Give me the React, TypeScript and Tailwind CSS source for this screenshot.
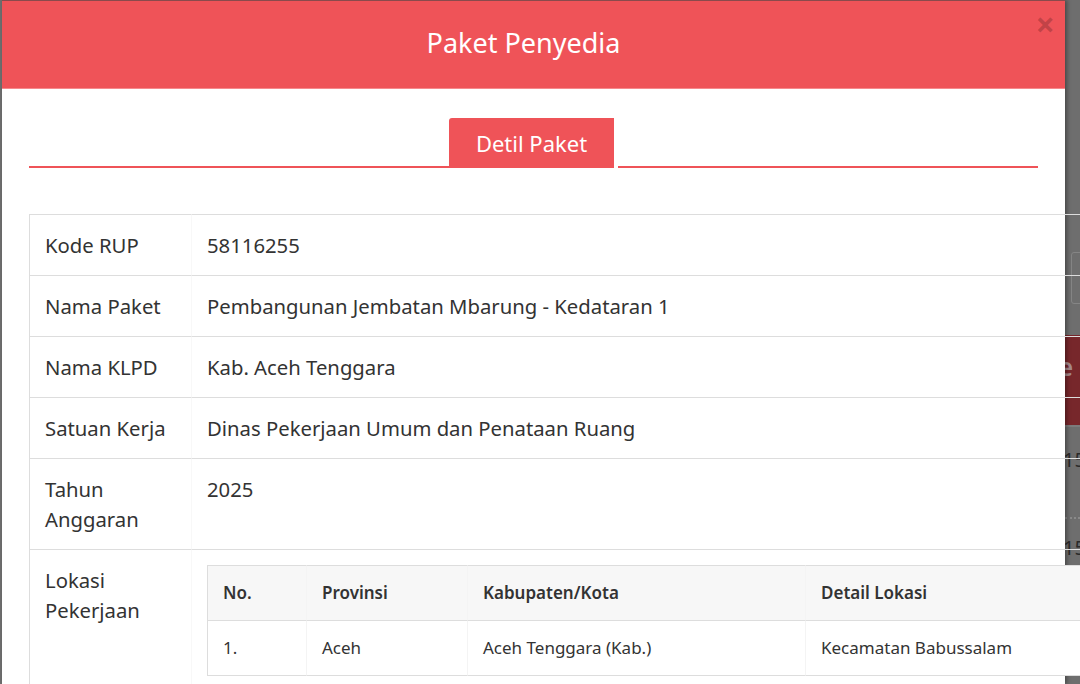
const details = [
  { label: "Kode RUP", value: "58116255" },
  { label: "Nama Paket", value: "Pembangunan Jembatan Mbarung - Kedataran 1" },
  { label: "Nama KLPD", value: "Kab. Aceh Tenggara" },
  { label: "Satuan Kerja", value: "Dinas Pekerjaan Umum dan Penataan Ruang" },
  { label: "Tahun Anggaran", value: "2025" },
];

const lokasi = [
  { no: "1.", provinsi: "Aceh", kabupaten: "Aceh Tenggara (Kab.)", detail: "Kecamatan Babussalam" },
];

function PageBehind() {
  // only a thin slice of the page under the backdrop is visible on the right
  return (
    <div className="ml-auto flex h-full w-[15px] flex-col overflow-hidden bg-[#6e6e6e] text-[#2a2a2a]">
      <div className="h-[252px] shrink-0" />
      <div className="ml-[6px] h-[52px] w-[20px] shrink-0 rounded-l-[3px] border border-[#858585]" />
      <div className="h-[31px] shrink-0" />
      <div className="flex h-[90px] shrink-0 items-start bg-[#77272b] pt-[16px]">
        <span className="ml-[-7px] text-[26px] font-semibold leading-[30px] text-[#a6898b]">e</span>
      </div>
      <div className="h-[2px] shrink-0 bg-[#7c7c7c]" />
      <div className="ml-[-2px] mt-[20px] text-[20px] leading-[26px]">15</div>
      <div className="mt-[44px] h-0 shrink-0 border-t-2 border-dotted border-[#8a8a8a]" />
      <div className="ml-[-2px] mt-[16px] text-[20px] leading-[26px]">15</div>
    </div>
  );
}

function DetailTable() {
  return (
    <table className="w-[1150px] border-separate border-spacing-0 text-[20.3px] leading-[30px] text-[#333]">
      <tbody>
        {details.map((row) => (
          <tr key={row.label}>
            <td className="w-[163px] border-t border-l border-r border-t-[#ddd] border-l-[#ddd] border-r-[#f8f8f8] px-[15px] py-[15px] align-top">
              {row.label}
            </td>
            <td className="border-t border-[#ddd] px-[15px] py-[15px] align-top">{row.value}</td>
          </tr>
        ))}
        <tr>
          <td className="w-[163px] border-t border-l border-r border-t-[#ddd] border-l-[#ddd] border-r-[#f8f8f8] px-[15px] py-[15px] align-top">
            Lokasi Pekerjaan
          </td>
          <td className="border-t border-[#ddd] px-[15px] py-[15px] align-top">
            <table className="border-separate border-spacing-0 text-[17px] leading-[24px] text-[#333]">
              <thead>
                <tr className="bg-[#f7f7f7] text-left">
                  <th className="w-[99px] border-y border-l border-[#ddd] px-[15px] py-[15px] font-semibold">No.</th>
                  <th className="w-[161px] border-y border-l border-[#ddd] border-l-[#f4f4f4] px-[15px] py-[15px] font-semibold">Provinsi</th>
                  <th className="w-[338px] border-y border-l border-[#ddd] border-l-[#f4f4f4] px-[15px] py-[15px] font-semibold">Kabupaten/Kota</th>
                  <th className="w-[340px] border-y border-l border-[#ddd] border-l-[#f4f4f4] px-[15px] py-[15px] font-semibold">Detail Lokasi</th>
                </tr>
              </thead>
              <tbody>
                {lokasi.map((l) => (
                  <tr key={l.no} className="bg-white">
                    <td className="border-b border-l border-[#ddd] px-[15px] py-[15px]">{l.no}</td>
                    <td className="border-b border-l border-[#ddd] border-l-[#f4f4f4] px-[15px] py-[15px]">{l.provinsi}</td>
                    <td className="border-b border-l border-[#ddd] border-l-[#f4f4f4] px-[15px] py-[15px]">{l.kabupaten}</td>
                    <td className="border-b border-l border-[#ddd] border-l-[#f4f4f4] px-[15px] py-[15px]">{l.detail}</td>
                  </tr>
                ))}
              </tbody>
            </table>
          </td>
        </tr>
      </tbody>
    </table>
  );
}

export default function App() {
  return (
    <div className="relative h-[684px] w-[1080px] overflow-hidden bg-[#6e6e6e] font-['Noto_Sans',sans-serif]">
      <PageBehind />

      {/* Modal */}
      <div className="absolute left-[2px] top-0 z-10 h-[684px] w-[1063px] border-t border-[#8a4a4c] bg-white shadow-[2px_0_4px_rgba(0,0,0,0.35)]">
        <div className="relative flex h-[88px] items-center justify-center border-b border-[#f6898c] bg-[#ef5358] pr-[20px]">
          <h4 className="-mt-[4px] text-[27px] leading-none text-white">Paket Penyedia</h4>
          <button className="absolute right-[10px] top-[6px] text-[34px] font-bold leading-none text-black/20">
            ×
          </button>
        </div>

        <div className="px-[27px] pt-[29px]">
          <div className="flex justify-center border-b-2 border-[#ef5358]">
            <div className="-mb-[2px] flex h-[50px] items-center rounded-t-[3px] border-r-4 border-white bg-[#ef5358] bg-clip-padding px-[27px] text-[22px] text-white">
              Detil Paket
            </div>
          </div>

          <div className="mt-[46px]">
            <DetailTable />
          </div>
        </div>
      </div>
    </div>
  );
}
